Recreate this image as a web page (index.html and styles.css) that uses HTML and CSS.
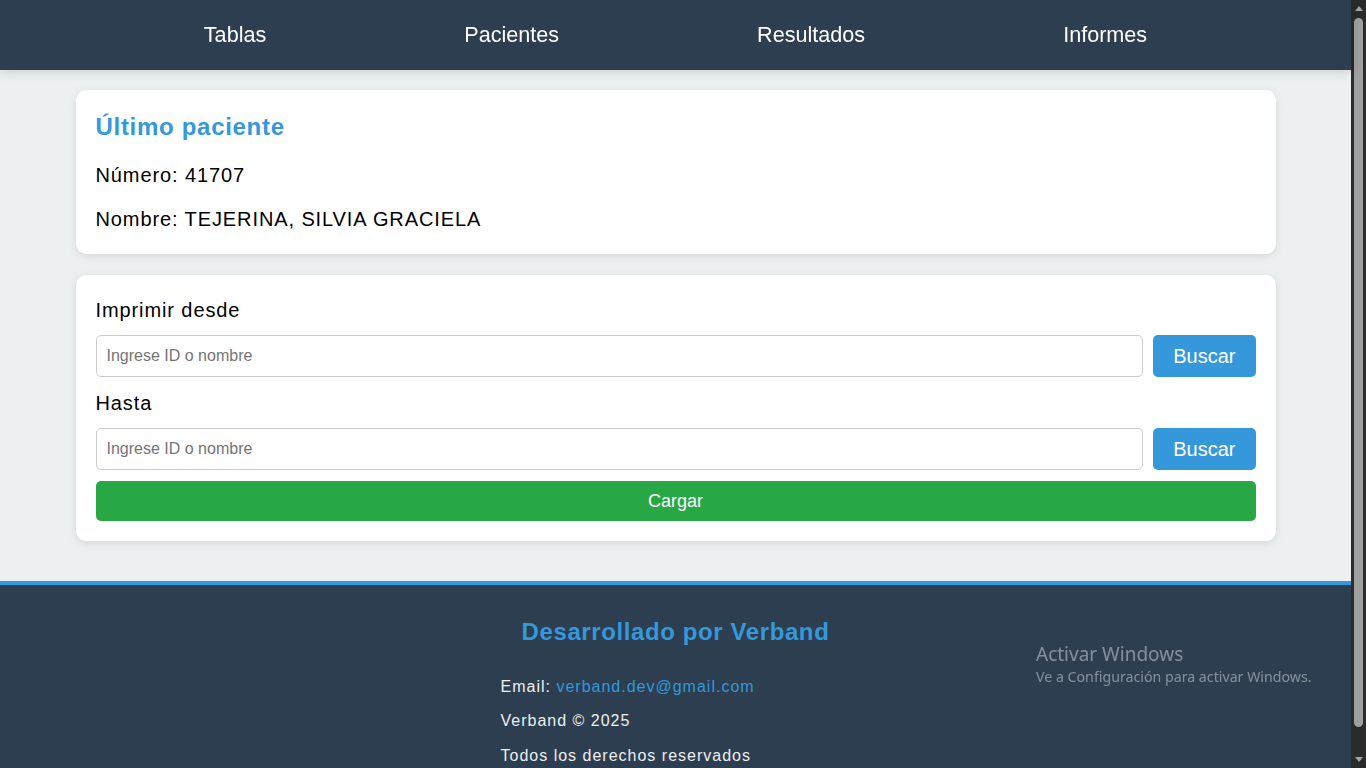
FILE: index.html
```html
<!DOCTYPE html>
<html lang="es">
<head>
<meta charset="utf-8">
<title>Informes</title>
<link rel="stylesheet" href="styles.css">
</head>
<body>
<div class="page">
  <header class="topbar">
    <nav class="nav">
      <a class="nav-link" href="#">Tablas</a>
      <a class="nav-link" href="#">Pacientes</a>
      <a class="nav-link" href="#">Resultados</a>
      <a class="nav-link" href="#">Informes</a>
    </nav>
  </header>

  <main class="main">
    <section class="card card-last">
      <h2 class="card-title">Último paciente</h2>
      <p class="info">Número: 41707</p>
      <p class="info info-last">Nombre: TEJERINA, SILVIA GRACIELA</p>
    </section>

    <section class="card card-print">
      <label class="field-label" for="desde">Imprimir desde</label>
      <div class="search-row">
        <input id="desde" class="search-input" type="text" placeholder="Ingrese ID o nombre">
        <button class="btn btn-search" type="button">Buscar</button>
      </div>
      <label class="field-label" for="hasta">Hasta</label>
      <div class="search-row">
        <input id="hasta" class="search-input" type="text" placeholder="Ingrese ID o nombre">
        <button class="btn btn-search" type="button">Buscar</button>
      </div>
      <button class="btn btn-load" type="button">Cargar</button>
    </section>
  </main>

  <footer class="footer">
    <h3 class="footer-title">Desarrollado por Verband</h3>
    <div class="footer-info">
      <p class="footer-line">Email: <a class="footer-link" href="#">verband.dev@gmail.com</a></p>
      <p class="footer-line">Verband © 2025</p>
      <p class="footer-line">Todos los derechos reservados</p>
    </div>
  </footer>
</div>

<div class="scrollbar">
  <span class="sb-arrow sb-up"></span>
  <span class="sb-thumb"></span>
  <span class="sb-arrow sb-down"></span>
</div>

<div class="activation">
  <div class="activation-title">Activar Windows</div>
  <div class="activation-sub">Ve a Configuración para activar Windows.</div>
</div>
</body>
</html>
```

FILE: styles.css
```css
html, body {
  margin: 0;
  padding: 0;
  height: 100%;
  overflow: hidden;
}

body {
  font-family: "Liberation Sans", Arial, sans-serif;
  background: #ecf0f1;
  color: #000;
}

.page {
  margin-right: 15px;
}

/* Header */
.topbar {
  background: #2c3e50;
  height: 70px;
  box-sizing: border-box;
  padding: 22px 0 23px;
  box-shadow: 0 2px 10px rgba(0, 0, 0, 0.15);
  position: relative;
  z-index: 1;
}

.nav {
  display: flex;
  justify-content: center;
  gap: 198px;
}

.nav-link {
  color: #fff;
  text-decoration: none;
  font-size: 21.6px;
  line-height: 25px;
}

/* Main */
.main {
  max-width: 1200px;
  margin: 0 auto;
  padding: 20px 0 40px;
}

.card {
  background: #fff;
  border-radius: 10px;
  box-shadow: 0 2px 10px rgba(0, 0, 0, 0.1);
}

.card-last {
  padding: 23px 20px 20px;
  margin-bottom: 21px;
}

.card-title {
  margin: 0 0 23px;
  font-size: 24px;
  line-height: 28px;
  font-weight: bold;
  color: #3498db;
  letter-spacing: 0.7px;
}

.info {
  margin: 0 0 21px;
  font-size: 20px;
  line-height: 23px;
  letter-spacing: 0.9px;
}

.info-last {
  margin-bottom: 3px;
}

.card-print {
  padding: 20px;
  display: flex;
  flex-direction: column;
}

.field-label {
  display: block;
  font-size: 20px;
  line-height: 31px;
  letter-spacing: 0.9px;
  margin-bottom: 9px;
}

.search-row {
  display: flex;
  gap: 10px;
  margin-bottom: 11px;
}

.search-input {
  flex: 1;
  height: 42px;
  box-sizing: border-box;
  border: 1px solid #ccc;
  border-radius: 5px;
  padding: 0 10px;
  font-family: "Liberation Sans", Arial, sans-serif;
  font-size: 16px;
  color: #000;
  background: #fff;
  outline: none;
}

.search-input::placeholder {
  color: #757575;
}

.btn {
  border: none;
  border-radius: 5px;
  color: #fff;
  font-family: "Liberation Sans", Arial, sans-serif;
  cursor: pointer;
}

.btn-search {
  height: 42px;
  padding: 0 20px;
  background: #3498db;
  font-size: 20px;
}

.btn-load {
  height: 40px;
  width: 100%;
  background: #28a745;
  font-size: 18px;
}

/* Footer */
.footer {
  background: #2c3e50;
  border-top: 4px solid #3498db;
  padding: 33px 0 30px;
  color: #ecf0f1;
}

.footer-title {
  margin: 0 0 32px;
  text-align: center;
  font-size: 24px;
  line-height: 28px;
  font-weight: bold;
  color: #3498db;
  letter-spacing: 0.6px;
}

.footer-info {
  max-width: 350px;
  margin: 0 auto;
}

.footer-line {
  margin: 0 0 16px;
  font-size: 16px;
  line-height: 18.4px;
  letter-spacing: 1px;
}

.footer-link {
  color: #3498db;
  text-decoration: none;
}

/* Fake window scrollbar (overlay) */
.scrollbar {
  position: fixed;
  top: 0;
  right: 0;
  width: 15px;
  height: 100%;
  background: #2b2b2b;
}

.sb-thumb {
  position: absolute;
  left: 3px;
  top: 18px;
  width: 9px;
  height: 709px;
  border-radius: 5px;
  background: #9f9f9f;
}

.sb-arrow {
  position: absolute;
  left: 4px;
  width: 0;
  height: 0;
  border-left: 4px solid transparent;
  border-right: 4px solid transparent;
}

.sb-up {
  top: 6px;
  border-bottom: 5px solid #a3a3a3;
}

.sb-down {
  bottom: 6px;
  border-top: 5px solid #a3a3a3;
}

/* OS activation watermark (overlay) */
.activation {
  position: fixed;
  left: 1036px;
  top: 642px;
  color: rgba(255, 255, 255, 0.42);
  font-family: "Noto Sans", "Open Sans", sans-serif;
}

.activation-title {
  font-size: 19px;
  line-height: 25px;
}

.activation-sub {
  font-size: 14.2px;
  line-height: 19px;
}
```
